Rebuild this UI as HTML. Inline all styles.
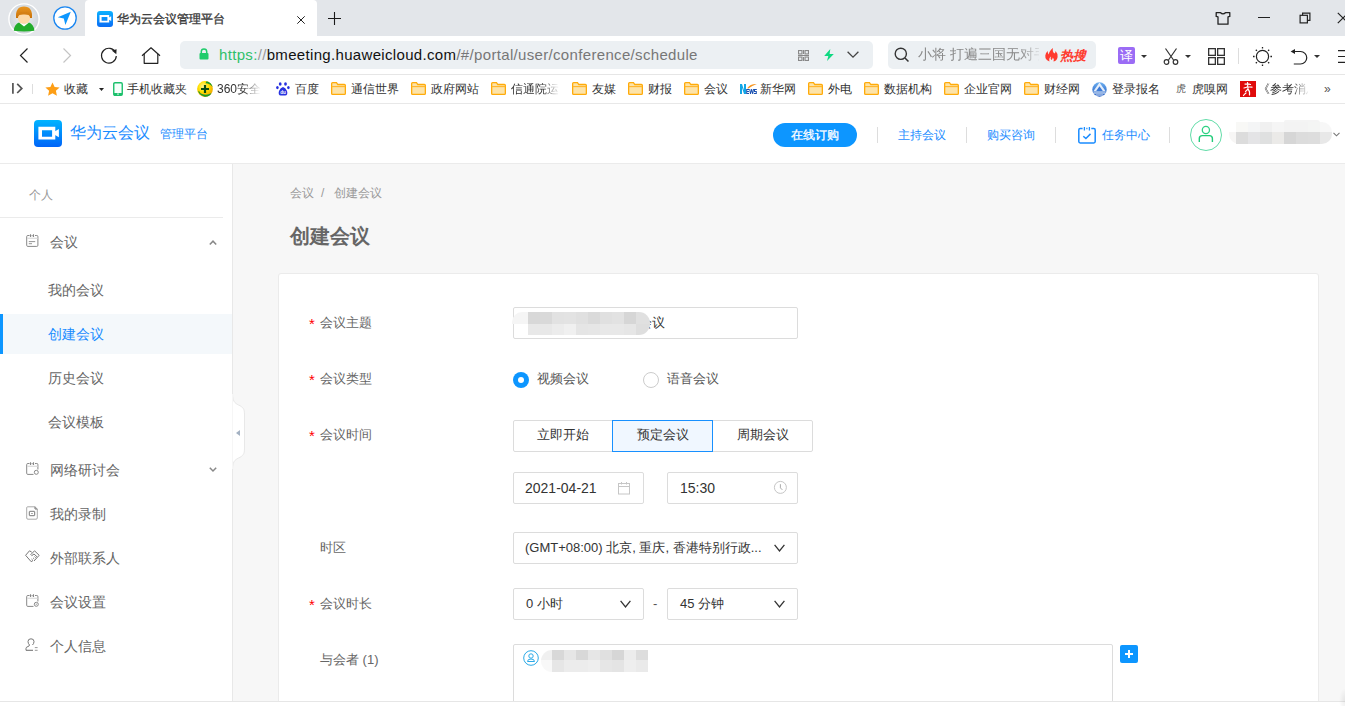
<!DOCTYPE html>
<html><head><meta charset="utf-8">
<style>
*{box-sizing:border-box;margin:0;padding:0}
html,body{width:1345px;height:706px;overflow:hidden;background:#fff;font-family:"Liberation Sans",sans-serif;color:#333}
.a{position:absolute}
.t{position:absolute;white-space:nowrap;line-height:1}
svg{position:absolute;overflow:visible}
/* chrome */
#tabbar{left:0;top:0;width:1345px;height:36px;background:#e3e6ea}
#tab{left:85px;top:0;width:232px;height:36px;background:#fff;border-radius:4px 4px 0 0}
#addr{left:180px;top:41px;width:693px;height:28px;background:#ecf0f3;border-radius:5px}
#srch{left:888px;top:41px;width:208px;height:28px;background:#ecf0f3;border-radius:5px}
.hl{left:0;width:1345px;height:1px;background:#e8e8e8}
.bm{font-size:12px;color:#333;top:83px}
.fold{width:15px;height:12px;top:83px}
/* page */
#sidebar{left:0;top:164px;width:233px;height:537px;background:#fff;border-right:1px solid #e8e8e8}
#main{left:233px;top:164px;width:1112px;height:537px;background:#f7f7f7}
#card{left:278px;top:273px;width:1041px;height:440px;background:#fff;border:1px solid #ebebeb;border-radius:3px}
.lbl{font-size:13px;color:#666}
.req{color:#f00;font-size:15px}
.inp{position:absolute;border:1px solid #dcdcdc;background:#fff;border-radius:2px}
.itxt{font-size:13px;color:#333}
.menu{font-size:14px;color:#666}
</style></head><body>
<!-- TAB BAR -->
<div id="tabbar" class="a"></div>
<div id="tab" class="a"></div>

<!-- avatar -->
<svg style="left:8px;top:3px" width="32" height="32" viewBox="0 0 32 32">
 <defs><radialGradient id="avg" cx="50%" cy="45%" r="55%"><stop offset="0" stop-color="#eef1f4"/><stop offset="1" stop-color="#cdd3d9"/></radialGradient>
 <linearGradient id="hair" x1="0" y1="0" x2="0" y2="1"><stop offset="0" stop-color="#e9951e"/><stop offset="1" stop-color="#c9730c"/></linearGradient></defs>
 <circle cx="16" cy="16" r="15.1" fill="url(#avg)" stroke="#fff" stroke-width="1.4"/>
 <path d="M5.8 27.8 Q6 21.5 11.5 19.3 L16 21.5 L20.5 19.3 Q26 21.5 26.4 27.8 Q16 29 5.8 27.8Z" fill="#22ad2c"/>
 <path d="M11 19.6 L16 23.5 L21 19.6 L20 19.1 L16 21.3 L12 19.1Z" fill="#fff"/>
 <path d="M8 15 Q7.2 3.5 16 3.5 Q24.8 3.5 24 15 L21 15 L11 15Z" fill="url(#hair)"/>
 <ellipse cx="16" cy="15.2" rx="6.1" ry="5.6" fill="#fdd9a6"/>
 <path d="M9.6 14 Q9.5 9 16 9 Q22.5 9 22.4 14 Q21 11.3 16 11.6 Q11 11.3 9.6 14Z" fill="#d47f12"/>
</svg>
<svg style="left:53px;top:6px" width="24" height="24" viewBox="0 0 24 24"><circle cx="12" cy="12" r="11.2" fill="#fff" stroke="#1a86f0" stroke-width="1.3"/><path d="M4.8 11.3 L17.8 5.8 L12.4 19 L10.8 12.6Z" fill="#0d97ff"/></svg>
<!-- favicon -->
<svg style="left:97px;top:11px" width="16" height="16" viewBox="0 0 16 16">
 <defs><linearGradient id="fg" x1="0" y1="0" x2="0" y2="1"><stop offset="0" stop-color="#0bb2ff"/><stop offset="1" stop-color="#0a6cf5"/></linearGradient></defs>
 <rect x="0" y="0" width="16" height="16" rx="3" fill="url(#fg)"/>
 <path d="M2.5 4 H12.2 V11.5 H2.5Z M4.6 6 V9.8 H10.4 V6Z" fill="#fff" fill-rule="evenodd"/>
 <path d="M12 6.6 L14.2 5.2 V10 L12 8.8Z" fill="#fff"/>
</svg>
<div class="t" style="left:117px;top:13px;font-size:12px;color:#3a3a3a;-webkit-text-stroke:0.35px #3a3a3a">华为云会议管理平台</div>
<svg style="left:297px;top:16px" width="8" height="8" viewBox="0 0 8 8"><path d="M0.3 0.3L7.7 7.7M7.7 0.3L0.3 7.7" stroke="#222" stroke-width="1"/></svg>
<svg style="left:328px;top:12px" width="13" height="13" viewBox="0 0 13 13"><path d="M6.5 0V13M0 6.5H13" stroke="#1a1a1a" stroke-width="1.1"/></svg>
<!-- window controls -->
<svg style="left:1215px;top:11px" width="16" height="14" viewBox="0 0 16 14"><path d="M1.2 1.6 H5.2 Q8 4.2 10.8 1.6 H14.8 V5.4 L13 5.9 V13.2 H3 V5.9 L1.2 5.4 Z" fill="none" stroke="#222" stroke-width="1.3" stroke-linejoin="round"/></svg>
<div class="a" style="left:1258px;top:17px;width:12px;height:1px;background:#222"></div>
<svg style="left:1299px;top:12px" width="12" height="12" viewBox="0 0 12 12"><rect x="1.1" y="3.3" width="7.3" height="7.6" fill="none" stroke="#222" stroke-width="1.2"/><path d="M3.6 3.3 V1.1 H10.9 V8.4 H8.4" fill="none" stroke="#222" stroke-width="1.2"/></svg>
<svg style="left:1337px;top:12px" width="12" height="12" viewBox="0 0 12 12"><path d="M0.8 0.8L11.2 11.2M11.2 0.8L0.8 11.2" stroke="#222" stroke-width="1.2"/></svg>

<!-- NAV ROW -->
<svg style="left:19px;top:48px" width="10" height="16" viewBox="0 0 10 16"><path d="M8.5 0.5 L1.5 7.5 L8.5 14.5" fill="none" stroke="#222" stroke-width="1.2"/></svg>
<svg style="left:62px;top:48px" width="10" height="16" viewBox="0 0 10 16"><path d="M1.5 0.5 L8.5 7.5 L1.5 14.5" fill="none" stroke="#c4c4c4" stroke-width="1.2"/></svg>
<svg style="left:100px;top:47px" width="18" height="18" viewBox="0 0 18 18"><path d="M15.6 5.5 A7.4 7.4 0 1 0 16.3 9" fill="none" stroke="#222" stroke-width="1.2"/><path d="M11.8 3.6 L16.6 2.2 L16.3 7.2Z" fill="#222"/></svg>
<svg style="left:141px;top:47px" width="20" height="18" viewBox="0 0 20 18" fill="none" stroke="#222" stroke-width="1.2" stroke-linejoin="round"><path d="M1 8.8 L10 0.8 L19 8.8"/><path d="M3.2 6.8 V16.3 H16.8 V6.8"/></svg>
<div id="addr" class="a"></div>
<svg style="left:199px;top:48px" width="10" height="12" viewBox="0 0 10 12"><path d="M2.3 5.5 V3.6 A2.7 2.7 0 0 1 7.7 3.6 V5.5" fill="none" stroke="#1fcc6b" stroke-width="1.5"/><rect x="0.5" y="5" width="9" height="6.5" rx="1" fill="#1fcc6b"/></svg>
<div class="t" style="left:219px;top:47px;font-size:15px;letter-spacing:0.33px;color:#777"><span style="color:#2fc06a">https:</span><span style="color:#999">//</span><span style="color:#111">bmeeting.huaweicloud.com</span>/#/portal/user/conference/schedule</div>
<svg style="left:798px;top:50px" width="11" height="11" viewBox="0 0 11 11" fill="none" stroke="#888" stroke-width="1.1"><rect x="0.55" y="0.55" width="3.4" height="3.4"/><rect x="7.05" y="0.55" width="3.4" height="3.4"/><rect x="0.55" y="7.05" width="3.4" height="3.4"/><rect x="7.05" y="7.05" width="3.4" height="3.4"/><path d="M5.5 0V4M5.5 7V11M0 5.5H11"/></svg>
<svg style="left:824px;top:49px" width="10" height="12" viewBox="0 0 10 12"><path d="M6.3 0 L0.2 7 H4.3 L3 12 L9.8 5 H5.6Z" fill="#0fd982"/></svg>
<svg style="left:847px;top:51px" width="12" height="8" viewBox="0 0 12 8"><path d="M0.6 0.8 L6 6.2 L11.4 0.8" fill="none" stroke="#444" stroke-width="1.3"/></svg>
<div id="srch" class="a"></div>
<svg style="left:894px;top:47px" width="16" height="16" viewBox="0 0 16 16"><circle cx="6.8" cy="6.8" r="5.6" fill="none" stroke="#333" stroke-width="1.4"/><path d="M11 11 L14.5 14.5" stroke="#333" stroke-width="1.5"/></svg>
<div class="t" style="left:918px;top:47px;font-size:14px;color:#888;width:121px;overflow:hidden;-webkit-mask-image:linear-gradient(90deg,#000 84%,rgba(0,0,0,0.2))">小将 打遍三国无对手</div>
<svg style="left:1045px;top:48px" width="13" height="14" viewBox="0 0 13 14"><path d="M4.5 13.6 Q0 12 0.3 7.5 Q0.6 4.5 2.8 3 Q2.5 5.5 3.8 6.5 Q4 3 8 0 Q7 3.5 9.5 5.5 Q10.5 4.5 10.6 3 Q13 5.5 12.6 9 Q12.2 12.5 8.5 13.6 Q9.5 11 7.8 9.5 Q7.5 11.5 6.2 12 Q5.2 10.5 6 8.5 Q3.5 10 4.5 13.6Z" fill="#ff3a2e"/></svg>
<div class="t" style="left:1060px;top:48.5px;font-size:13px;font-weight:bold;font-style:italic;color:#ff3a2e">热搜</div>
<svg style="left:1118px;top:47px" width="17" height="17" viewBox="0 0 17 17"><rect width="17" height="17" rx="2" fill="#9b6cf5"/></svg>
<div class="t" style="left:1120px;top:49px;font-size:13px;color:#fff">译</div>
<svg style="left:1141px;top:55px" width="6" height="3" viewBox="0 0 6 3"><path d="M0 0H6L3 3Z" fill="#333"/></svg>
<svg style="left:1163px;top:48px" width="16" height="17" viewBox="0 0 16 17" fill="none" stroke="#333" stroke-width="1.2"><path d="M2.5 0.5 L10.5 12 M13.5 0.5 L5.5 12"/><circle cx="3.5" cy="14" r="2.3"/><circle cx="12.5" cy="14" r="2.3"/></svg>
<svg style="left:1185px;top:55px" width="6" height="3" viewBox="0 0 6 3"><path d="M0 0H6L3 3Z" fill="#333"/></svg>
<svg style="left:1208px;top:48px" width="17" height="17" viewBox="0 0 17 17" fill="none" stroke="#333" stroke-width="1.3"><rect x="0.65" y="0.65" width="6.7" height="6.7"/><rect x="9.65" y="0.65" width="6.7" height="6.7"/><rect x="0.65" y="9.65" width="6.7" height="6.7"/><rect x="9.65" y="9.65" width="6.7" height="6.7"/></svg>
<div class="a" style="left:1238px;top:48px;width:1px;height:16px;background:#ddd"></div>
<svg style="left:1252px;top:46px" width="21" height="21" viewBox="0 0 21 21" fill="none" stroke="#222" stroke-width="1.2"><circle cx="10.5" cy="10.5" r="6.1"/><path d="M10.5 1V2.6M10.5 18.4V20M1 10.5H2.6M18.4 10.5H20M3.8 3.8L4.9 4.9M16.1 16.1L17.2 17.2M3.8 17.2L4.9 16.1M16.1 4.9L17.2 3.8" stroke-width="1.3"/></svg>
<svg style="left:1290px;top:49px" width="18" height="17" viewBox="0 0 18 17" fill="none" stroke="#222" stroke-width="1.2"><path d="M4 2.5 H10.5 A6.2 6.2 0 0 1 10.5 15 H3.8"/><path d="M0.6 2.5 L5 0 V5Z" fill="#222" stroke="none"/></svg>
<svg style="left:1314px;top:55px" width="6" height="3" viewBox="0 0 6 3"><path d="M0 0H6L3 3Z" fill="#333"/></svg>
<svg style="left:1338px;top:50px" width="10" height="14" viewBox="0 0 10 14" fill="none" stroke="#222" stroke-width="1.2"><path d="M0 0.6H10M0 6.5H10M0 12.4H10"/></svg>
<div class="a hl" style="top:74px;background:#e6e6e6"></div>

<!-- BOOKMARKS -->
<svg style="left:11px;top:83px" width="12" height="11" viewBox="0 0 12 11" fill="none" stroke="#555" stroke-width="1.7"><path d="M1.9 0V10.7M6.2 0.8 L10.8 5.4 L6.2 10"/></svg>
<div class="a" style="left:32px;top:84px;width:1px;height:10px;background:#ddd"></div>
<svg style="left:45px;top:82px" width="15" height="14.5" viewBox="0 0 15 14"><path d="M7.5 0.3 L9.6 4.8 L14.6 5.3 L10.9 8.6 L11.9 13.6 L7.5 11.1 L3.1 13.6 L4.1 8.6 L0.4 5.3 L5.4 4.8Z" fill="#fd9e16"/></svg>
<div class="t bm" style="left:64px">收藏</div>
<svg style="left:99px;top:88px" width="5" height="3" viewBox="0 0 5 3"><path d="M0 0H5L2.5 3Z" fill="#222"/></svg>
<svg style="left:113px;top:82px" width="10" height="14" viewBox="0 0 10 14"><rect x="0.75" y="0.75" width="8.5" height="12.5" rx="1.2" fill="#f6fffb" stroke="#1cc06c" stroke-width="1.4"/><rect x="0.8" y="11" width="8.4" height="2.2" fill="#1cc06c"/><path d="M4 12.1 H6" stroke="#fff" stroke-width="0.8"/></svg>
<div class="t bm" style="left:127px">手机收藏夹</div>
<svg style="left:197px;top:81px" width="16" height="16" viewBox="0 0 16 16"><defs><radialGradient id="y360" cx="40%" cy="35%" r="65%"><stop offset="0" stop-color="#fff79a"/><stop offset="0.5" stop-color="#ffe000"/><stop offset="1" stop-color="#f0a800"/></radialGradient></defs><circle cx="8" cy="8" r="7.9" fill="url(#y360)"/><path d="M9.5 0.3 Q14.5 1.5 15.7 6 Q13 2.5 8.5 2.2Z" fill="#1a9a2a"/><path d="M1.2 10.5 Q3 14.8 8.5 15.8 Q4.5 14.5 2.2 10.2Z M0.8 9.5 Q2.5 14 7 15.6 Q13 16 14.5 12 Q10 15 5 13 Q2 11.5 0.8 9.5Z" fill="#1a9a2a"/><path d="M8 4 V12 M4 8 H12" stroke="#0b4d12" stroke-width="2.2"/></svg>
<div class="t bm" style="left:217px;width:44px;overflow:hidden;-webkit-mask-image:linear-gradient(90deg,#000 60%,transparent)">360安全</div>
<svg style="left:276px;top:82px" width="14" height="14" viewBox="0 0 14 14" fill="#2832e0"><ellipse cx="4.2" cy="2" rx="1.4" ry="1.8"/><ellipse cx="9.5" cy="2" rx="1.4" ry="1.8"/><ellipse cx="1.4" cy="5.6" rx="1.3" ry="1.6"/><ellipse cx="12.4" cy="5.6" rx="1.3" ry="1.6"/><path d="M7 5 Q4.5 5.5 3 9 Q1.8 13.2 4.8 13.6 Q7 13.2 9.2 13.6 Q12.2 13.2 11 9 Q9.5 5.5 7 5Z"/><text x="7" y="12.3" text-anchor="middle" font-family="Liberation Sans" font-weight="bold" font-size="4.6" fill="#fff">du</text></svg>
<div class="t bm" style="left:295px">百度</div>
<svg style="left:331px;top:82px" width="15" height="13" viewBox="0 0 15 13"><path d="M1.6 0.65 H5.5 L6.8 2.5 H13.4 Q14.35 2.5 14.35 3.4 V11.4 Q14.35 12.35 13.4 12.35 H1.6 Q0.65 12.35 0.65 11.4 V1.6 Q0.65 0.65 1.6 0.65Z" fill="#fde3a8" stroke="#ffab0a" stroke-width="1.3"/><path d="M0.8 4.6 H14.2" stroke="#ffb52a" stroke-width="1.1"/></svg><div class="t bm" style="left:351px">通信世界</div>
<svg style="left:411px;top:82px" width="15" height="13" viewBox="0 0 15 13"><path d="M1.6 0.65 H5.5 L6.8 2.5 H13.4 Q14.35 2.5 14.35 3.4 V11.4 Q14.35 12.35 13.4 12.35 H1.6 Q0.65 12.35 0.65 11.4 V1.6 Q0.65 0.65 1.6 0.65Z" fill="#fde3a8" stroke="#ffab0a" stroke-width="1.3"/><path d="M0.8 4.6 H14.2" stroke="#ffb52a" stroke-width="1.1"/></svg><div class="t bm" style="left:431px">政府网站</div>
<svg style="left:491px;top:82px" width="15" height="13" viewBox="0 0 15 13"><path d="M1.6 0.65 H5.5 L6.8 2.5 H13.4 Q14.35 2.5 14.35 3.4 V11.4 Q14.35 12.35 13.4 12.35 H1.6 Q0.65 12.35 0.65 11.4 V1.6 Q0.65 0.65 1.6 0.65Z" fill="#fde3a8" stroke="#ffab0a" stroke-width="1.3"/><path d="M0.8 4.6 H14.2" stroke="#ffb52a" stroke-width="1.1"/></svg><div class="t bm" style="left:511px;width:49px;overflow:hidden;-webkit-mask-image:linear-gradient(90deg,#000 65%,transparent)">信通院运</div>
<svg style="left:572px;top:82px" width="15" height="13" viewBox="0 0 15 13"><path d="M1.6 0.65 H5.5 L6.8 2.5 H13.4 Q14.35 2.5 14.35 3.4 V11.4 Q14.35 12.35 13.4 12.35 H1.6 Q0.65 12.35 0.65 11.4 V1.6 Q0.65 0.65 1.6 0.65Z" fill="#fde3a8" stroke="#ffab0a" stroke-width="1.3"/><path d="M0.8 4.6 H14.2" stroke="#ffb52a" stroke-width="1.1"/></svg><div class="t bm" style="left:592px">友媒</div>
<svg style="left:628px;top:82px" width="15" height="13" viewBox="0 0 15 13"><path d="M1.6 0.65 H5.5 L6.8 2.5 H13.4 Q14.35 2.5 14.35 3.4 V11.4 Q14.35 12.35 13.4 12.35 H1.6 Q0.65 12.35 0.65 11.4 V1.6 Q0.65 0.65 1.6 0.65Z" fill="#fde3a8" stroke="#ffab0a" stroke-width="1.3"/><path d="M0.8 4.6 H14.2" stroke="#ffb52a" stroke-width="1.1"/></svg><div class="t bm" style="left:648px">财报</div>
<svg style="left:684px;top:82px" width="15" height="13" viewBox="0 0 15 13"><path d="M1.6 0.65 H5.5 L6.8 2.5 H13.4 Q14.35 2.5 14.35 3.4 V11.4 Q14.35 12.35 13.4 12.35 H1.6 Q0.65 12.35 0.65 11.4 V1.6 Q0.65 0.65 1.6 0.65Z" fill="#fde3a8" stroke="#ffab0a" stroke-width="1.3"/><path d="M0.8 4.6 H14.2" stroke="#ffb52a" stroke-width="1.1"/></svg><div class="t bm" style="left:704px">会议</div>
<svg style="left:740px;top:83px" width="17" height="12" viewBox="0 0 17 12"><path d="M0 1 H2 L4 7.2 V1 H6 V11 H4 L2 4.8 V11 H0Z" fill="#12a6e6"/><path d="M6.2 6 H9 V7 H7.2 V8 H9 V9 H7.2 V10 H9 V11 H6.2Z" fill="#1a50b0"/><path d="M9.2 6 H10.2 L10.7 9 L11.2 6 H12 L12.5 9 L13 6 H14 L13.2 11 H12.2 L11.6 8.2 L11 11 H10Z" fill="#1a50b0"/><path d="M14 6 H16.8 V7 H15 V8 H16.8 V11 H14 V10 H15.8 V9 H14Z" fill="#1a50b0"/><path d="M7.2 5.3 Q10 0.8 16.8 1 Q12 2.6 8.4 5.6Z" fill="#f7941d"/></svg>
<div class="t bm" style="left:760px">新华网</div>
<svg style="left:808px;top:82px" width="15" height="13" viewBox="0 0 15 13"><path d="M1.6 0.65 H5.5 L6.8 2.5 H13.4 Q14.35 2.5 14.35 3.4 V11.4 Q14.35 12.35 13.4 12.35 H1.6 Q0.65 12.35 0.65 11.4 V1.6 Q0.65 0.65 1.6 0.65Z" fill="#fde3a8" stroke="#ffab0a" stroke-width="1.3"/><path d="M0.8 4.6 H14.2" stroke="#ffb52a" stroke-width="1.1"/></svg><div class="t bm" style="left:828px">外电</div>
<svg style="left:864px;top:82px" width="15" height="13" viewBox="0 0 15 13"><path d="M1.6 0.65 H5.5 L6.8 2.5 H13.4 Q14.35 2.5 14.35 3.4 V11.4 Q14.35 12.35 13.4 12.35 H1.6 Q0.65 12.35 0.65 11.4 V1.6 Q0.65 0.65 1.6 0.65Z" fill="#fde3a8" stroke="#ffab0a" stroke-width="1.3"/><path d="M0.8 4.6 H14.2" stroke="#ffb52a" stroke-width="1.1"/></svg><div class="t bm" style="left:884px">数据机构</div>
<svg style="left:944px;top:82px" width="15" height="13" viewBox="0 0 15 13"><path d="M1.6 0.65 H5.5 L6.8 2.5 H13.4 Q14.35 2.5 14.35 3.4 V11.4 Q14.35 12.35 13.4 12.35 H1.6 Q0.65 12.35 0.65 11.4 V1.6 Q0.65 0.65 1.6 0.65Z" fill="#fde3a8" stroke="#ffab0a" stroke-width="1.3"/><path d="M0.8 4.6 H14.2" stroke="#ffb52a" stroke-width="1.1"/></svg><div class="t bm" style="left:964px">企业官网</div>
<svg style="left:1024px;top:82px" width="15" height="13" viewBox="0 0 15 13"><path d="M1.6 0.65 H5.5 L6.8 2.5 H13.4 Q14.35 2.5 14.35 3.4 V11.4 Q14.35 12.35 13.4 12.35 H1.6 Q0.65 12.35 0.65 11.4 V1.6 Q0.65 0.65 1.6 0.65Z" fill="#fde3a8" stroke="#ffab0a" stroke-width="1.3"/><path d="M0.8 4.6 H14.2" stroke="#ffb52a" stroke-width="1.1"/></svg><div class="t bm" style="left:1044px">财经网</div>
<svg style="left:1092px;top:82px" width="15" height="15" viewBox="0 0 15 15"><defs><linearGradient id="gg" x1="0" y1="0" x2="0" y2="1"><stop offset="0" stop-color="#6fb0f0"/><stop offset="1" stop-color="#1a56c0"/></linearGradient></defs><circle cx="7.5" cy="7.5" r="7.2" fill="url(#gg)"/><path d="M7.5 0.6 L1.2 9.6 H13.8Z" fill="#fff" opacity="0.85"/><path d="M7.5 4.2 L4.2 9 H10.8Z" fill="#3c7ad6"/><path d="M1.5 11 H13.5" stroke="#fff" stroke-width="1"/><path d="M3.8 13 H11.2" stroke="#fff" stroke-width="0.9"/></svg>
<div class="t bm" style="left:1112px">登录报名</div>
<div class="t" style="left:1176px;top:84px;font-size:10px;color:#555">虎</div>
<div class="t bm" style="left:1192px">虎嗅网</div>
<svg style="left:1240px;top:81px" width="16" height="16" viewBox="0 0 16 16"><rect width="16" height="16" fill="#e00b0b"/><path d="M5 3.2 Q8 2.5 10.5 3.5 M7.5 1.5 Q8.5 4 7 6 M4 7 Q8 5.5 12 6.2 M8.5 6 Q8 9 5.5 10.5 M8.2 8.5 Q10 10 9.5 14 M6 12 Q4.5 13 3.5 14.5" stroke="#fff" stroke-width="1.2" fill="none" stroke-linecap="round"/></svg>
<div class="t bm" style="left:1258px;width:50px;overflow:hidden;-webkit-mask-image:linear-gradient(90deg,#000 68%,rgba(0,0,0,0.1))">《参考消息</div>
<div class="t" style="left:1324px;top:83px;font-size:12px;color:#555">»</div>
<div class="a hl" style="top:103px;background:#e8e8e8"></div>

<!-- PAGE HEADER -->
<svg style="left:34px;top:120px" width="28" height="27" viewBox="0 0 28 27">
 <defs><linearGradient id="lg" x1="0" y1="0" x2="0" y2="1"><stop offset="0" stop-color="#00b4ff"/><stop offset="1" stop-color="#0064f8"/></linearGradient></defs>
 <rect width="28" height="27" rx="4" fill="url(#lg)"/>
 <path d="M4.4 6.8 H21.3 V19.6 H4.4Z M8 10.2 V16.7 H18.1 V10.2Z" fill="#fff" fill-rule="evenodd"/>
 <path d="M21 11.3 L24.9 9 V17.2 L21 15Z" fill="#fff"/>
</svg>
<div class="t" style="left:70px;top:125px;font-size:16px;color:#1a8cff">华为云会议</div>
<div class="t" style="left:160px;top:128px;font-size:12px;color:#1a8cff">管理平台</div>
<div class="a" style="left:773px;top:123px;width:84px;height:24px;border-radius:12px;background:#0d96ff"></div>
<div class="t" style="left:791px;top:129px;font-size:12px;color:#fff;-webkit-text-stroke:0.3px #fff">在线订购</div>
<div class="a" style="left:877px;top:127px;width:1px;height:16px;background:#ddd"></div>
<div class="t" style="left:898px;top:129px;font-size:12px;color:#1a8cff">主持会议</div>
<div class="a" style="left:966px;top:127px;width:1px;height:16px;background:#ddd"></div>
<div class="t" style="left:987px;top:129px;font-size:12px;color:#1a8cff">购买咨询</div>
<div class="a" style="left:1055px;top:127px;width:1px;height:16px;background:#ddd"></div>
<svg style="left:1078px;top:127px" width="18" height="17" viewBox="0 0 18 17" fill="none" stroke="#1a8cff" stroke-width="1.5"><path d="M4.6 1.5 H2.2 Q0.8 1.5 0.8 2.9 V14.6 Q0.8 16 2.2 16 H15.8 Q17.2 16 17.2 14.6 V2.9 Q17.2 1.5 15.8 1.5 H13.3"/><path d="M6.4 0 V3.6 M11.4 0 V3.6 M8.3 1.5 H9.5" stroke-width="1.3"/><path d="M5.3 9.2 L7.9 11.5 L12.5 6.9"/></svg>
<div class="t" style="left:1102px;top:129px;font-size:12px;color:#1a8cff">任务中心</div>
<div class="a" style="left:1169px;top:127px;width:1px;height:16px;background:#ddd"></div>
<svg style="left:1190px;top:119px" width="32" height="32" viewBox="0 0 32 32" fill="none"><circle cx="16" cy="16" r="15.5" stroke="#62dca8" stroke-width="1"/><circle cx="15.9" cy="11" r="3.6" stroke="#2ed283" stroke-width="1.3"/><path d="M9.3 23 V19.6 Q9.3 16.6 12.3 16.6 H19.4 Q22.4 16.6 22.4 19.6 V23" stroke="#1fcb78" stroke-width="1.4"/></svg>
<div class="a" style="left:1229px;top:132px;width:12px;height:12px;border-radius:0 0 0 10px;background:#f7f6f5"></div><div class="a" style="left:1284px;top:120px;width:36px;height:3px;border-radius:6px 10px 0 0;background:#f4f4f4"></div><div class="a" style="left:1236px;top:122px;width:12px;height:10px;background:#f8f8f6"></div><div class="a" style="left:1236px;top:132px;width:12px;height:12px;background:#dcdcdc"></div><div class="a" style="left:1248px;top:122px;width:12px;height:10px;background:#f4f5f6"></div><div class="a" style="left:1248px;top:132px;width:12px;height:12px;background:#e4e4e6"></div><div class="a" style="left:1260px;top:122px;width:12px;height:10px;background:#f0f0f0"></div><div class="a" style="left:1260px;top:132px;width:12px;height:12px;background:#dfe0e0"></div><div class="a" style="left:1272px;top:122px;width:12px;height:10px;background:#f5f5f5"></div><div class="a" style="left:1272px;top:132px;width:12px;height:12px;background:#ebeae8"></div><div class="a" style="left:1284px;top:122px;width:12px;height:10px;background:#f3f3f3"></div><div class="a" style="left:1284px;top:132px;width:12px;height:12px;background:#d6d6d6"></div><div class="a" style="left:1296px;top:122px;width:12px;height:10px;background:#f3f3f3"></div><div class="a" style="left:1296px;top:132px;width:12px;height:12px;background:#dcdcdc"></div><div class="a" style="left:1308px;top:122px;width:12px;height:10px;background:#f4f5f4"></div><div class="a" style="left:1308px;top:132px;width:12px;height:12px;background:#dddddd"></div><div class="a" style="left:1320px;top:122px;width:12px;height:22px;border-radius:0 10px 10px 0;background:linear-gradient(#f7f7f7 45%,#e8e8e8 45%)"></div><svg style="left:1333px;top:132px" width="7" height="5" viewBox="0 0 7 5"><path d="M0.5 0.8 L3.5 3.8 L6.5 0.8" fill="none" stroke="#777" stroke-width="1.1"/></svg>
<div class="a hl" style="top:163px;background:#ebebeb"></div>

<!-- SIDEBAR -->
<div id="sidebar" class="a"></div>
<div class="t" style="left:29px;top:189px;font-size:12px;color:#999">个人</div>
<div class="a" style="left:0;top:217px;width:223px;height:1px;background:#ebebeb"></div>
<svg style="left:26px;top:234px" width="13" height="13" viewBox="0 0 13 13" fill="none" stroke="#888" stroke-width="1"><path d="M3.5 1.5 H1.8 Q0.7 1.5 0.7 2.6 V11.3 Q0.7 12.4 1.8 12.4 H10.8 Q11.9 12.4 11.9 11.3 V2.6 Q11.9 1.5 10.8 1.5 H9"/><path d="M4.5 0.3 V3 M7.5 0.3 V3 M5.6 1.6 H6.6" stroke-width="1.1"/><path d="M1 4.3 H11.6" stroke="#ddd" stroke-width="1.3"/><path d="M2.8 7.6 H9.2 M2.8 9.7 H6" stroke-width="0.9"/></svg>
<div class="t menu" style="left:50px;top:235px">会议</div>
<svg style="left:209px;top:240px" width="8" height="5" viewBox="0 0 8 5"><path d="M0.8 4.5 L4 1.2 L7.2 4.5" fill="none" stroke="#888" stroke-width="1.5"/></svg>
<div class="t menu" style="left:48px;top:283px">我的会议</div>
<div class="a" style="left:0;top:314px;width:232px;height:40px;background:#f4f8fb"></div>
<div class="a" style="left:0;top:314px;width:3px;height:40px;background:#0d96ff"></div>
<div class="t menu" style="left:48px;top:327px;color:#1a8cff">创建会议</div>
<div class="t menu" style="left:48px;top:371px">历史会议</div>
<div class="t menu" style="left:48px;top:415px">会议模板</div>
<svg style="left:26px;top:462px" width="14" height="14" viewBox="0 0 14 14" fill="none" stroke="#888" stroke-width="1"><path d="M3.5 1.5 H1.8 Q0.7 1.5 0.7 2.6 V11.3 Q0.7 12.4 1.8 12.4 H7.5 M11.9 7.5 V2.6 Q11.9 1.5 10.8 1.5 H9"/><path d="M4.5 0.3 V3 M7.5 0.3 V3 M5.6 1.6 H6.6" stroke-width="1.1"/><path d="M1 4.3 H11.6" stroke="#ddd" stroke-width="1.3"/><circle cx="10.3" cy="10.3" r="2"/></svg>
<div class="t menu" style="left:50px;top:463px">网络研讨会</div>
<svg style="left:209px;top:467px" width="8" height="5" viewBox="0 0 8 5"><path d="M0.8 0.8 L4 4 L7.2 0.8" fill="none" stroke="#888" stroke-width="1.5"/></svg>
<svg style="left:26px;top:506px" width="12" height="14" viewBox="0 0 12 14" fill="none" stroke="#aaa" stroke-width="1"><path d="M1.5 0.8 H9 L11.3 3 V12 Q11.3 13.2 10 13.2 H2 Q0.7 13.2 0.7 12 V2 Q0.7 0.8 1.5 0.8Z"/><path d="M9 0.8 V3 H11.3" stroke="#777"/><rect x="3.3" y="5.3" width="5.4" height="4.4" rx="0.5" stroke="#777"/><path d="M5.2 7.5 H6.8" stroke="#999"/></svg>
<div class="t menu" style="left:50px;top:507px">我的录制</div>
<svg style="left:25px;top:550px" width="15" height="13" viewBox="0 0 15 13" fill="none" stroke="#777" stroke-width="1"><path d="M4.5 0.8 L0.6 5.3 L6.2 11.7 L8 10.5 M6.8 2.2 L4.5 0.8 M9.5 0.8 L14.2 5.3 L9 11 M9.5 0.8 L5.8 4.6 L6.8 5.6 L9 4 L12 6.8"/><path d="M6.5 9 L7.8 10.2 M8 7.8 L9.3 9 M9.5 6.5 L10.8 7.8" stroke-width="0.9"/></svg>
<div class="t menu" style="left:50px;top:551px">外部联系人</div>
<svg style="left:26px;top:594px" width="14" height="14" viewBox="0 0 14 14" fill="none" stroke="#888" stroke-width="1"><path d="M3.5 1.5 H1.8 Q0.7 1.5 0.7 2.6 V11.3 Q0.7 12.4 1.8 12.4 H7.5 M11.9 7.5 V2.6 Q11.9 1.5 10.8 1.5 H9"/><path d="M4.5 0.3 V3 M7.5 0.3 V3 M5.6 1.6 H6.6" stroke-width="1.1"/><path d="M1 4.3 H11.6" stroke="#ddd" stroke-width="1.3"/><circle cx="10.3" cy="10.3" r="2"/><circle cx="10.3" cy="10.3" r="0.7" fill="#aaa" stroke="none"/></svg>
<div class="t menu" style="left:50px;top:595px">会议设置</div>
<svg style="left:25px;top:638px" width="14" height="14" viewBox="0 0 14 14" fill="none" stroke="#777" stroke-width="1"><path d="M1 12.3 V10.5 Q1 9 3 8.5 Q4.5 8 4.5 7 Q3 5.5 3 3.5 Q3 0.8 6 0.8 Q9 0.8 9 3.5 Q9 5.5 7.5 7"/><path d="M1 12.3 H8" stroke-width="1.1"/><path d="M9.8 9.6 H12.6 M9.8 12.3 H12.6" stroke="#999" stroke-width="1"/></svg>
<div class="t menu" style="left:50px;top:639px">个人信息</div>

<!-- MAIN -->
<div id="main" class="a"></div>
<svg style="left:232px;top:393px" width="13" height="77" viewBox="0 0 13 77"><path d="M0.5 0 C0.5 8 2.5 10 6.5 12 C11 14 12.5 16 12.5 21 V56 C12.5 61 11 63 6.5 65 C2.5 67 0.5 69 0.5 77Z" fill="#fff" stroke="#e8e8e8" stroke-width="1"/><path d="M0 1 V76" stroke="#fff" stroke-width="1.2"/><path d="M8 37 L4 40 L8 43Z" fill="#a3b1c2"/></svg>
<div class="t" style="left:290px;top:187px;font-size:12px;color:#999">会议</div><div class="t" style="left:321px;top:187px;font-size:12px;color:#999">/</div><div class="t" style="left:334px;top:187px;font-size:12px;color:#999">创建会议</div>
<div class="t" style="left:290px;top:226px;font-size:20px;font-weight:bold;color:#666">创建会议</div>
<div id="card" class="a"></div>

<!-- FORM -->
<div class="t req" style="left:309px;top:316px">*</div>
<div class="t lbl" style="left:320px;top:316px">会议主题</div>
<div class="inp" style="left:513px;top:307px;width:285px;height:32px"></div>
<div class="t itxt" style="left:638.5px;top:316px;font-size:13px">会议</div><div class="a" style="left:512px;top:312px;width:16px;height:12px;border-radius:10px 0 0 0;background:#f5f5f5"></div><div class="a" style="left:528px;top:312px;width:12px;height:12px;background:#d8d8d8"></div><div class="a" style="left:528px;top:324px;width:12px;height:11px;background:#e8e8e8"></div><div class="a" style="left:540px;top:312px;width:12px;height:12px;background:#d9d9d9"></div><div class="a" style="left:540px;top:324px;width:12px;height:11px;background:#e8e8e8"></div><div class="a" style="left:552px;top:312px;width:12px;height:12px;background:#e2e2e2"></div><div class="a" style="left:552px;top:324px;width:12px;height:11px;background:#ececec"></div><div class="a" style="left:564px;top:312px;width:12px;height:12px;background:#e3e3e3"></div><div class="a" style="left:564px;top:324px;width:12px;height:11px;background:#f0f0f0"></div><div class="a" style="left:576px;top:312px;width:12px;height:12px;background:#e0e0e0"></div><div class="a" style="left:576px;top:324px;width:12px;height:11px;background:#e5e5e5"></div><div class="a" style="left:588px;top:312px;width:12px;height:12px;background:#dadada"></div><div class="a" style="left:588px;top:324px;width:12px;height:11px;background:#e6e6e6"></div><div class="a" style="left:600px;top:312px;width:12px;height:12px;background:#e0e0e0"></div><div class="a" style="left:600px;top:324px;width:12px;height:11px;background:#e8e8e8"></div><div class="a" style="left:612px;top:312px;width:12px;height:12px;background:#e2e2e2"></div><div class="a" style="left:612px;top:324px;width:12px;height:11px;background:#e8e8e8"></div><div class="a" style="left:624px;top:312px;width:12px;height:12px;background:#d6d6d6"></div><div class="a" style="left:624px;top:324px;width:12px;height:11px;background:#e6e6e6"></div><div class="a" style="left:636px;top:312px;width:14px;height:23px;border-radius:0 11px 11px 0;background:linear-gradient(#e0e0e0 52%,#dedede 52%)"></div>


<div class="t req" style="left:309px;top:372px">*</div>
<div class="t lbl" style="left:320px;top:372px">会议类型</div>
<svg style="left:513px;top:372px" width="16" height="16" viewBox="0 0 16 16"><circle cx="8" cy="8" r="8" fill="#0d96ff"/><circle cx="8" cy="8" r="3" fill="#fff"/></svg>
<div class="t itxt" style="left:537px;top:372px;color:#555">视频会议</div>
<svg style="left:643px;top:372px" width="16" height="16" viewBox="0 0 16 16"><circle cx="8" cy="8" r="7.5" fill="#fff" stroke="#ccc"/></svg>
<div class="t itxt" style="left:667px;top:372px;color:#555">语音会议</div>

<div class="t req" style="left:309px;top:428px">*</div>
<div class="t lbl" style="left:320px;top:428px">会议时间</div>
<div class="inp" style="left:513px;top:420px;width:300px;height:32px"></div>
<div class="a" style="left:612px;top:420px;width:101px;height:32px;border:1px solid #1890ff;background:#f0f7ff"></div>
<div class="t itxt" style="left:537px;top:428px">立即开始</div>
<div class="t itxt" style="left:637px;top:428px">预定会议</div>
<div class="t itxt" style="left:737px;top:428px">周期会议</div>

<div class="inp" style="left:513px;top:472px;width:131px;height:32px"></div>
<div class="t" style="left:525px;top:481px;font-size:14px;color:#333">2021-04-21</div>
<svg style="left:617px;top:482px" width="14" height="13" viewBox="0 0 14 13" fill="none" stroke="#c6c6c6" stroke-width="1"><rect x="1.5" y="1.5" width="11" height="10.5"/><path d="M1.5 4.5H12.5M4.5 0V2.5M9.5 0V2.5"/></svg>
<div class="inp" style="left:667px;top:472px;width:131px;height:32px"></div>
<div class="t" style="left:680px;top:481px;font-size:14px;color:#333">15:30</div>
<svg style="left:774px;top:481px" width="13" height="13" viewBox="0 0 13 13" fill="none" stroke="#c6c6c6" stroke-width="1"><circle cx="6.4" cy="6.4" r="6"/><path d="M6.4 3.2V6.9L8.4 8.9" stroke="#aaa"/></svg>

<div class="t lbl" style="left:320px;top:541px">时区</div>
<div class="inp" style="left:513px;top:532px;width:285px;height:32px"></div>
<div class="t" style="left:525px;top:541px;font-size:13px;color:#333">(GMT+08:00) 北京, 重庆, 香港特别行政...</div>
<svg style="left:774px;top:544px" width="11" height="8" viewBox="0 0 11 8"><path d="M0.6 0.8 L5.5 7 L10.4 0.8" fill="none" stroke="#333" stroke-width="1.3"/></svg>

<div class="t req" style="left:309px;top:597px">*</div>
<div class="t lbl" style="left:320px;top:597px">会议时长</div>
<div class="inp" style="left:513px;top:588px;width:131px;height:32px"></div>
<div class="t" style="left:526px;top:597px;font-size:13px;color:#333">0 小时</div>
<svg style="left:620px;top:600px" width="11" height="8" viewBox="0 0 11 8"><path d="M0.6 0.8 L5.5 7 L10.4 0.8" fill="none" stroke="#333" stroke-width="1.3"/></svg>
<div class="t" style="left:653px;top:597px;font-size:13px;color:#555">-</div>
<div class="inp" style="left:667px;top:588px;width:131px;height:32px"></div>
<div class="t" style="left:680px;top:597px;font-size:13px;color:#333">45 分钟</div>
<svg style="left:774px;top:600px" width="11" height="8" viewBox="0 0 11 8"><path d="M0.6 0.8 L5.5 7 L10.4 0.8" fill="none" stroke="#333" stroke-width="1.3"/></svg>

<div class="t lbl" style="left:320px;top:653px">与会者 (1)</div>
<div class="inp" style="left:513px;top:644px;width:600px;height:80px"></div>
<svg style="left:523px;top:650px" width="16" height="16" viewBox="0 0 16 16" fill="none" stroke="#2aaae8" stroke-width="1"><circle cx="8" cy="8" r="7.3"/><circle cx="8" cy="6" r="2.2"/><path d="M4.5 11.5 Q4.5 9 8 9 Q11.5 9 11.5 11.5Z"/></svg>
<div class="a" style="left:541px;top:650px;width:11px;height:22px;border-radius:11px 0 0 11px;background:linear-gradient(#f0f0f0 45%,#f8f8f8 45%)"></div><div class="a" style="left:552px;top:650px;width:12px;height:10px;background:#d8d8d8"></div><div class="a" style="left:552px;top:660px;width:12px;height:12px;background:#e6e6e6"></div><div class="a" style="left:564px;top:650px;width:12px;height:10px;background:#e6e6e6"></div><div class="a" style="left:564px;top:660px;width:12px;height:12px;background:#ececec"></div><div class="a" style="left:576px;top:650px;width:12px;height:10px;background:#d8d8d8"></div><div class="a" style="left:576px;top:660px;width:12px;height:12px;background:#ececec"></div><div class="a" style="left:588px;top:650px;width:12px;height:10px;background:#e6e6e6"></div><div class="a" style="left:588px;top:660px;width:12px;height:12px;background:#eeeeee"></div><div class="a" style="left:600px;top:650px;width:12px;height:10px;background:#e0e0e0"></div><div class="a" style="left:600px;top:660px;width:12px;height:12px;background:#e6e6e6"></div><div class="a" style="left:612px;top:650px;width:12px;height:10px;background:#d6d6d6"></div><div class="a" style="left:612px;top:660px;width:12px;height:12px;background:#e4e4e4"></div><div class="a" style="left:624px;top:650px;width:12px;height:10px;background:#ececec"></div><div class="a" style="left:624px;top:660px;width:12px;height:12px;background:#eeeeee"></div><div class="a" style="left:636px;top:650px;width:12px;height:10px;background:#dddddd"></div><div class="a" style="left:636px;top:660px;width:12px;height:12px;background:#eaeaea"></div>
<div class="a" style="left:1120px;top:645px;width:18px;height:18px;border-radius:2px;background:#0d96ff"></div>
<svg style="left:1120px;top:645px" width="18" height="18" viewBox="0 0 18 18"><path d="M9 5V13M5 9H13" stroke="#fff" stroke-width="2"/></svg>

<div class="a" style="left:0;top:701px;width:1345px;height:5px;background:#fff;border-top:1px solid #e6e6e6"></div>
<div class="a" style="left:1339px;top:688px;width:6px;height:18px;background:radial-gradient(ellipse at 100% 70%,rgba(0,0,0,0.07),rgba(0,0,0,0) 70%)"></div>
</body></html>
